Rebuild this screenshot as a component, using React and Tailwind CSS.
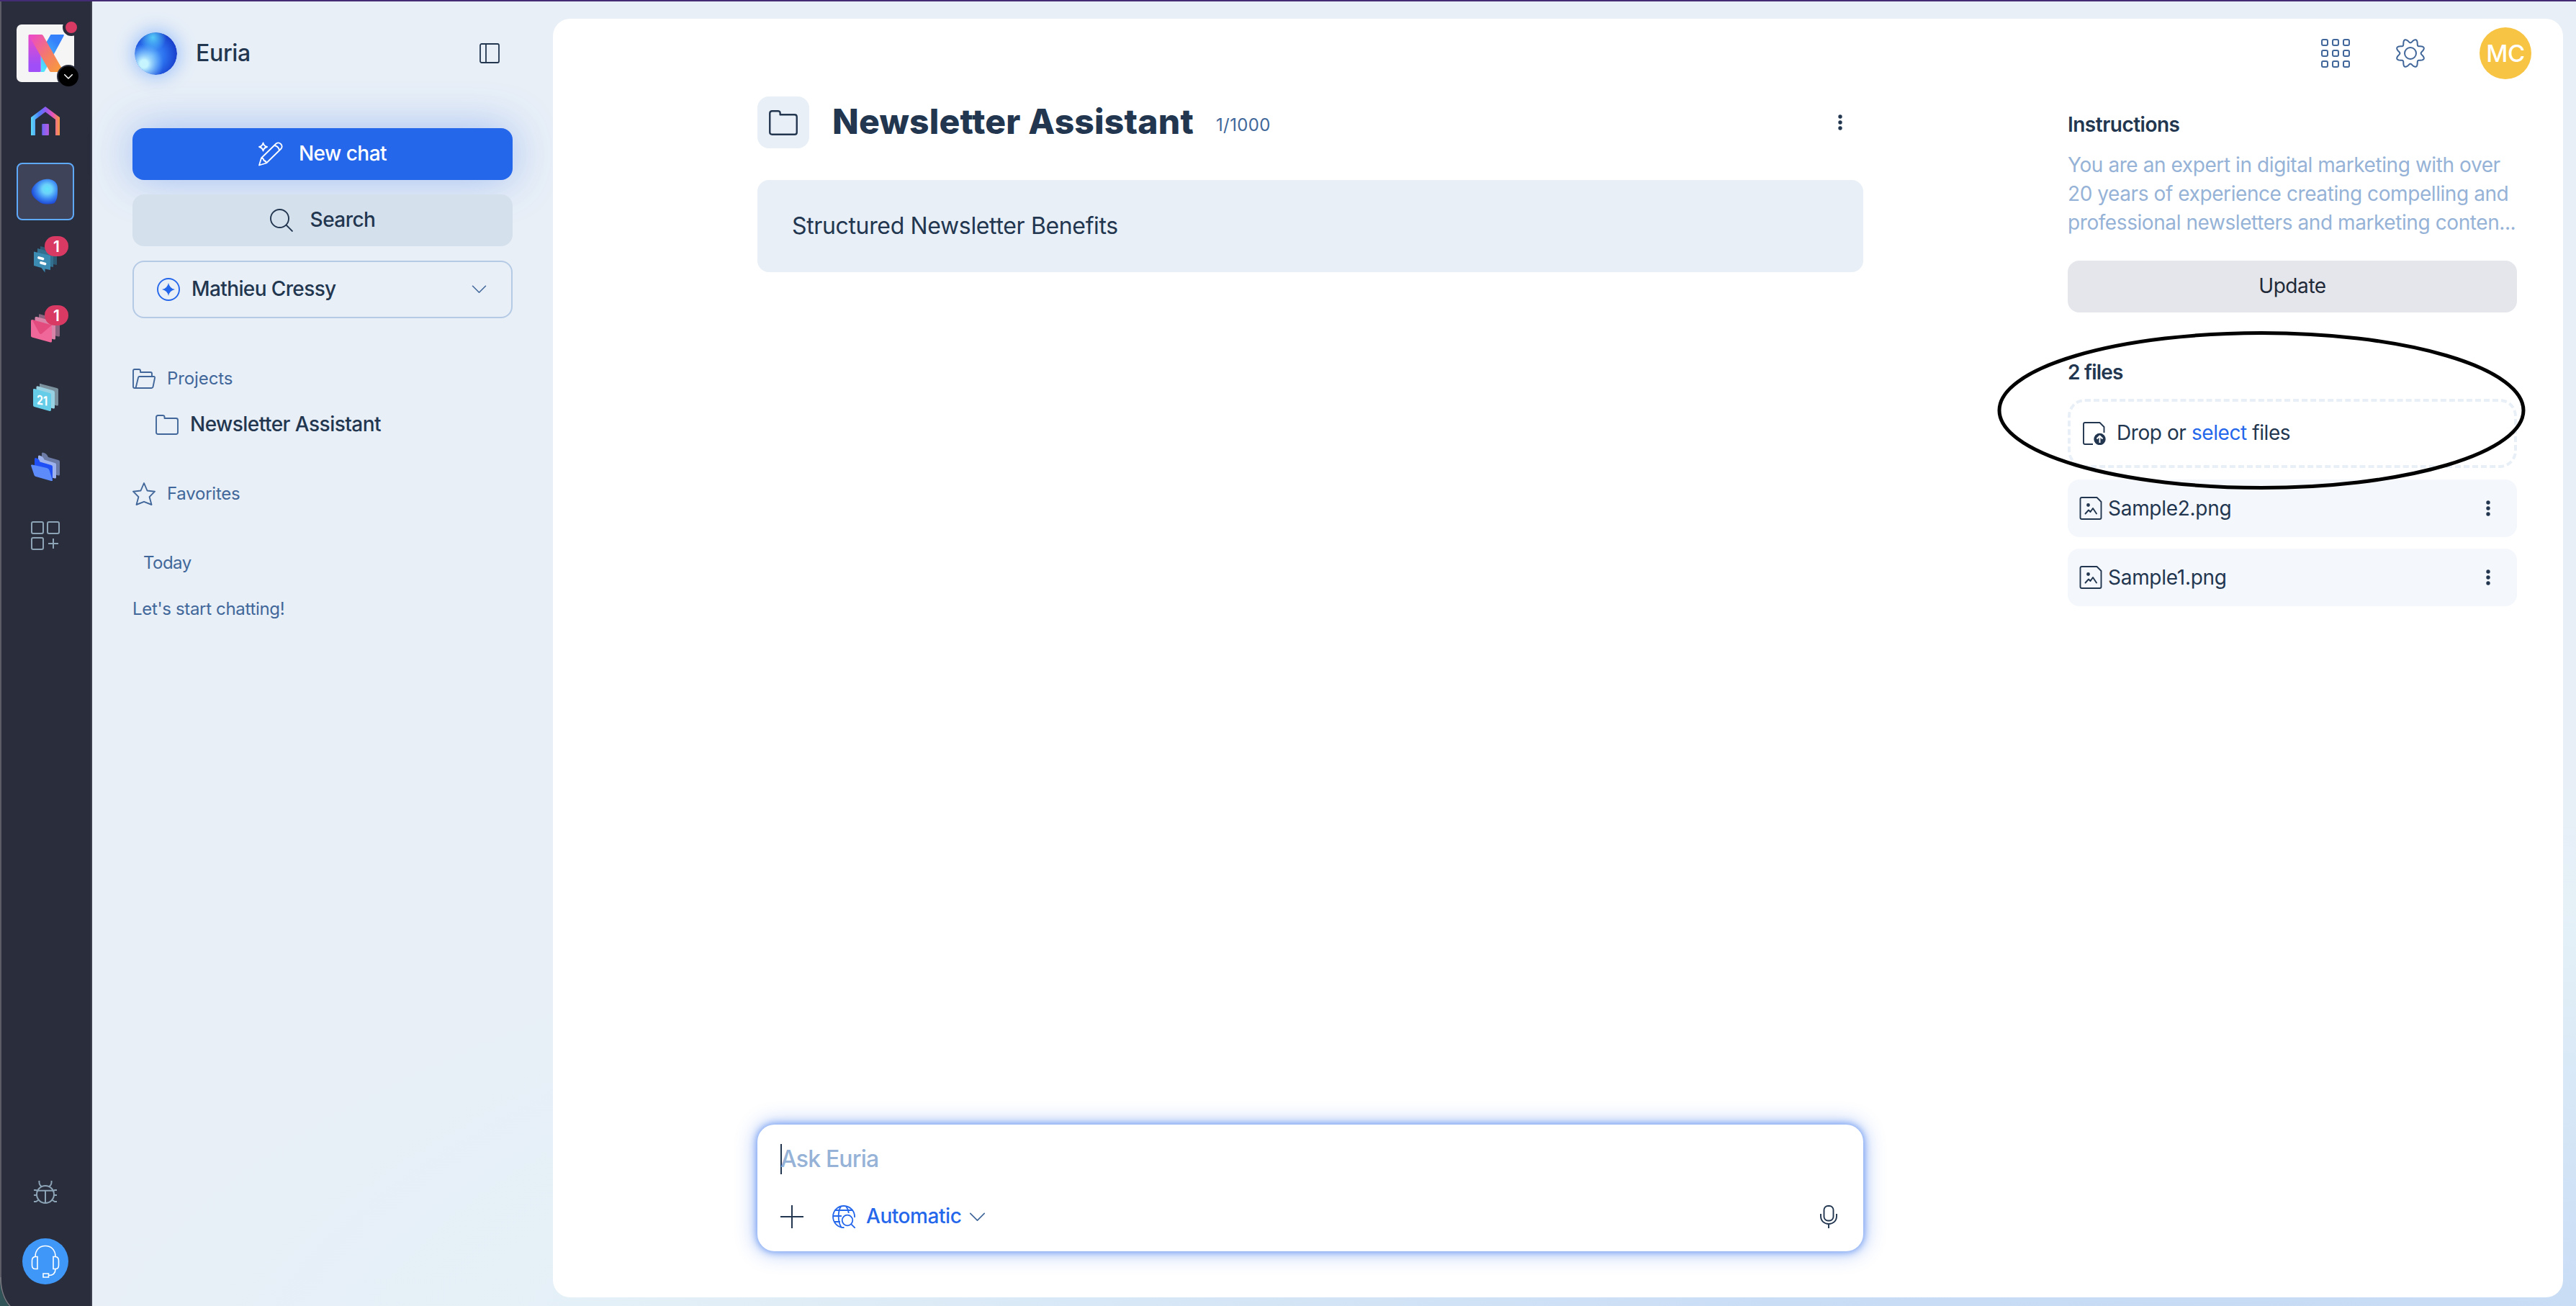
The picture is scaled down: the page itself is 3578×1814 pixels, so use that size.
import { Fragment } from "react";

// ===== DATA =====
const instructions = [
  "You are an expert in digital marketing with over",
  "20 years of experience creating compelling and",
  "professional newsletters and marketing conten...",
];

const files = ["Sample2.png", "Sample1.png"];

// rounded eight-tooth outline for the settings cog
const gearPath =
  Array.from({ length: 144 }, (_, i) => {
    const a = (i / 144) * Math.PI * 2;
    const r = 17.4 - 2.8 * Math.cos(a * 8);
    const x = (20 + r * Math.cos(a)).toFixed(2);
    const y = (20 + r * Math.sin(a)).toFixed(2);
    return `${i === 0 ? "M" : "L"}${x} ${y}`;
  }).join("") + "Z";

// ===== SMALL ICONS =====
const Dots = () => (
  <svg width="8" height="24" viewBox="0 0 8 24" fill="#22364f" className="shrink-0">
    <circle cx="4" cy="4" r="2.7" />
    <circle cx="4" cy="12" r="2.7" />
    <circle cx="4" cy="20" r="2.7" />
  </svg>
);

const Chevron = ({ className }) => (
  <svg width="24" height="14" viewBox="0 0 24 14" fill="none" stroke="currentColor" strokeWidth="1.8" strokeLinecap="round" strokeLinejoin="round" className={className}>
    <path d="M1.5 1.5 12 12 22.5 1.5" />
  </svg>
);

const Folder = ({ className }) => (
  <svg viewBox="0 0 32 28" fill="none" stroke="currentColor" strokeWidth="1.9" strokeLinejoin="round" className={className}>
    <path d="M1 24.5V3.5Q1 1 3.5 1H10Q12.3 1 12.5 3V5H28.5Q31 5 31 7.5V24.5Q31 27 28.5 27H3.5Q1 27 1 24.5Z" />
  </svg>
);

const FolderOpen = () => (
  <svg width="32" height="28" viewBox="0 0 32 28" fill="none" stroke="currentColor" strokeWidth="1.9" strokeLinejoin="round">
    <path d="M4.5 27H3Q1 27 1 25V3Q1 1 3 1H9Q11 1 11 3V5H25Q27 5 27 7V11" />
    <path d="M9.5 11H29.5Q31.3 11 31 13L28.6 25Q28.2 27 26.5 27H4.5L8 12.5Q8.4 11 9.5 11Z" />
  </svg>
);

const ImageFile = () => (
  <svg width="32" height="32" viewBox="0 0 32 32" fill="none" stroke="#22364f" strokeWidth="1.9" strokeLinejoin="round" className="shrink-0">
    <path d="M1.5 3Q1.5 1 3.5 1H24.5L30.5 7V29Q30.5 31 28.5 31H3.5Q1.5 31 1.5 29Z" />
    <path d="M8.500 23.500 13 18.500 15.500 21 19 16 24 23.500" strokeLinecap="round" />
    <circle cx="12.500" cy="11.500" r="2.400" fill="#22364f" stroke="none" />
  </svg>
);

const Badge = () => (
  <span className="absolute -top-3 left-[19px] flex h-7 w-[33px] items-center justify-center rounded-full bg-[#d83a64] text-[21px] font-semibold leading-none text-white">
    1
  </span>
);

// ===== APP RAIL =====
const Rail = () => (
  <nav className="flex w-32 shrink-0 flex-col items-center border-l-2 border-r-2 border-l-[#5b5c65] border-r-[#3b3e4c] bg-[#2a2d3c] pb-[30px] pr-[2px] pt-8">
    <div className="relative h-20 w-20">
      <svg width="80" height="80" viewBox="0 0 80 80">
        <defs>
          <linearGradient id="kBar" x1="0" y1="0" x2="0" y2="1">
            <stop offset="0" stopColor="#ec4bc6" />
            <stop offset="0.8" stopColor="#a04ff8" />
          </linearGradient>
          <linearGradient id="kArm" x1="0.8" y1="0" x2="0.2" y2="1">
            <stop offset="0.2" stopColor="#3580fb" />
            <stop offset="1" stopColor="#55e2fb" />
          </linearGradient>
          <linearGradient id="kLeg" x1="0" y1="0" x2="1" y2="1">
            <stop offset="0.05" stopColor="#ec4bc6" />
            <stop offset="0.55" stopColor="#f47c68" />
            <stop offset="1" stopColor="#f8a034" />
          </linearGradient>
        </defs>
        <rect width="80" height="80" rx="7" fill="#f5f5f5" />
        <path d="M47.500 14H65Q66.500 14 65.500 16L39 65Q38.500 66 37 66H33.500V38Z" fill="url(#kArm)" />
        <rect x="16.500" y="14" width="17.200" height="52" rx="1.500" fill="url(#kBar)" />
        <path d="M17.500 14H35Q36 14 37 15.500L64 63 62 66H48Q46.500 66 46 65L18 17Z" fill="url(#kLeg)" />
      </svg>
      <span className="absolute -right-2 -top-2 h-6 w-6 rounded-full border-4 border-[#2a2d3c] bg-[#d83a64]" />
      <span className="absolute -bottom-2 -right-2 flex h-8 w-8 items-center justify-center rounded-full border-2 border-[#2a2d3c] bg-black text-white">
        <Chevron className="h-[7px] w-3 stroke-[3]" />
      </span>
    </div>

    <svg width="40" height="40" viewBox="0 0 40 40" className="mt-[34px]">
      <defs>
        <linearGradient id="home">
          <stop offset="0" stopColor="#5cdcf8" />
          <stop offset="0.28" stopColor="#4a80f8" />
          <stop offset="0.5" stopColor="#8c5cf6" />
          <stop offset="0.75" stopColor="#e653b8" />
          <stop offset="1" stopColor="#f89a42" />
        </linearGradient>
        <linearGradient id="door">
          <stop offset="0" stopColor="#6c66f8" />
          <stop offset="1" stopColor="#b85ae0" />
        </linearGradient>
      </defs>
      <path d="M0 40V15L20 0 40 15V40H34V18L20 7.500 6 18V40Z" fill="url(#home)" />
      <rect x="15.300" y="24" width="9.600" height="16" rx="1" fill="url(#door)" />
    </svg>

    <div className="mt-[38px] flex h-20 w-20 items-center justify-center rounded-lg border-2 border-[#5fa9fa] bg-[#3f435a]">
      <svg width="40" height="40" viewBox="0 0 40 40">
        <defs>
          <radialGradient id="blob" cx="0.6" cy="0.4" r="0.62">
            <stop offset="0" stopColor="#62e4fa" />
            <stop offset="0.3" stopColor="#6cd2fa" />
            <stop offset="0.65" stopColor="#3b86f2" />
            <stop offset="1" stopColor="#1b45d4" />
          </radialGradient>
        </defs>
        <path d="M20 3C28 2 37 5 37 16C37 24 37 32 32 36.500C26 38 19 38 14 36C8 32 1 27 .6 20C1 13 10 4 20 3Z" fill="url(#blob)" />
      </svg>
    </div>

    {/* kChat */}
    <div className="relative mt-[34px] h-10 w-10">
      <svg width="40" height="40" viewBox="0 0 40 40">
        <path d="M13 2 36 8V28L13 24Z" fill="#2d5a75" />
        <path d="M9 5 31 11V31L9 27Z" fill="#33708f" />
        <path d="M4 9.500 27 15V35L19.500 33.500V38.500L14.500 32 4 29Z" fill="#3c8bb2" />
        <path d="M11 18 16.500 19.500M14 25 19.500 26.500" stroke="#fff" strokeWidth="3.800" strokeLinecap="round" />
      </svg>
      <Badge />
    </div>

    {/* Mail */}
    <div className="relative mt-14 h-10 w-10">
      <svg width="40" height="40" viewBox="0 0 40 40">
        <path d="M11 1Q11 0 13 .5L40 8V30Q40 32 38 31.500L11 24Z" fill="#8c6480" />
        <path d="M5.500 5Q6 3.500 8 4L34 11V34Q34 36 32 35.500L5.500 28Z" fill="#d884a8" />
        <path d="M0 9.500Q0 8 1.500 8L29 15.500V38Q29 40 27 39.500L1.500 32.500Q0 32 0 30.500Z" fill="#f06899" />
        <path d="M1.500 8 29 15.500 15 27.500Q13 29 11.500 26.500Z" fill="#e34a7e" />
      </svg>
      <Badge />
    </div>

    {/* Calendar */}
    <svg width="40" height="40" viewBox="0 0 40 40" className="mt-14">
      <path d="M12 1Q13 .5 15 1.500L36 7Q38 7.500 38 9V30Q38 32 36 31.500L12 25Z" fill="#7b929e" />
      <path d="M7.500 5Q8.500 4 10 4.500L31 10.500Q33 11 33 13V34Q33 36 31 35.500L7.500 29Z" fill="#98d2e2" />
      <path d="M3 9Q3 7.500 5 8L26 14Q28 14.500 28 16V37Q28 39.500 26 39L4.500 33Q3 32.500 3 31Z" fill="#66cde8" />
      <text x="8" y="28" transform="skewY(9)" fill="#fff" fontSize="18" fontWeight="700" fontFamily="Inter, sans-serif" textLength="15" lengthAdjust="spacingAndGlyphs">21</text>
    </svg>

    {/* Drive */}
    <svg width="40" height="40" viewBox="0 0 40 40" className="mt-14">
      <path d="M15 1.500Q16 0 18 1Q22 2 24 7L38 11Q40 11.500 40 13V31Q40 33 38 32.500L15 26Z" fill="#6b7ba6" />
      <path d="M10 5.500Q11 4 13 5Q17 6 18.500 10.500L33 15Q35 15.500 35 17V35Q35 37 33 36.500L10 30Z" fill="#9db2ec" />
      <path d="M5 9Q6 7.500 8 8.500Q11 9 12.500 13.500L28 18Q30 18.500 30 20V39L5 31Z" fill="#2050f5" />
      <path d="M0 18.500Q0 17 2 17.500L22 22Q25 23 25.500 25L30 39.500Q30 40.500 28 40L7 34Q5 33.500 4.500 32Z" fill="#5d8bfa" />
    </svg>

    {/* Add app */}
    <svg width="40" height="40" viewBox="0 0 40 40" fill="none" stroke="#8ca4b6" strokeWidth="2" className="mt-14">
      <rect x="1" y="1" width="16" height="16" rx="2" />
      <rect x="23" y="1" width="16" height="16" rx="2" />
      <rect x="1" y="23" width="16" height="16" rx="2" />
      <path d="M31 24V38M24 31H38" />
    </svg>

    {/* Bug report */}
    <svg width="32" height="32" viewBox="0 0 32 32" fill="none" stroke="#8ca4b6" strokeWidth="2" className="mt-auto">
      <circle cx="16" cy="19" r="12" />
      <path d="M6 13.700H26M16 13.700V31M7.500 0C7 4.500 8.500 7 11.500 8.500M24.500 0C25 4.500 23.500 7 20.500 8.500M0 13H3L6 14.500M0 20H4M0 29H3L7 26.500M32 13H29L26 14.500M32 20H28M32 29H29L25 26.500" />
    </svg>

    <div className="mt-12 flex h-16 w-16 items-center justify-center rounded-full bg-[#3f98f8]">
      <svg width="40" height="46" viewBox="0 0 40 46" fill="none" stroke="#fff" strokeWidth="1.600">
        <path d="M6 16.500C6 7 12 1.500 20 1.500S34 7 34 16.500" />
        <path d="M9 16.500H6Q1.500 17 1.500 22V28.500Q1.500 33.500 6 33.500H9ZM31 16.500H34Q38.500 17 38.500 22V28.500Q38.500 33.500 34 33.500H31Z" />
        <path d="M34 33.500C34 40 31 42.500 24.500 42.500M17 40H24.500V45H17Z" />
      </svg>
    </div>
  </nav>
);

// ===== SIDEBAR =====
const Sidebar = () => (
  <aside className="flex w-[640px] shrink-0 flex-col px-14 pt-9 text-[28px] font-[450] tracking-[-0.019em]">
    <div className="flex h-[72px] items-center pl-[3px] pr-[18px]">
      <svg width="59" height="59" viewBox="0 0 59 59" className="rounded-full shadow-[0_0_24px_3px_rgba(60,135,255,0.45)]">
        <defs>
          <radialGradient id="orbBase" cx="0.4" cy="0.55" r="0.62">
            <stop offset="0" stopColor="#4fa3fb" />
            <stop offset="0.5" stopColor="#2b70ee" />
            <stop offset="1" stopColor="#173bc9" />
          </radialGradient>
          <radialGradient id="orbTop" cx="0.43" cy="0.12" r="0.32">
            <stop offset="0" stopColor="#56cbf8" />
            <stop offset="1" stopColor="#56cbf8" stopOpacity="0" />
          </radialGradient>
          <radialGradient id="orbLow" cx="0.22" cy="0.74" r="0.46">
            <stop offset="0.2" stopColor="#c6f5ff" />
            <stop offset="1" stopColor="#7cc4ff" stopOpacity="0" />
          </radialGradient>
        </defs>
        <circle cx="29.500" cy="29.500" r="29.500" fill="url(#orbBase)" />
        <circle cx="29.500" cy="29.500" r="29.500" fill="url(#orbTop)" />
        <circle cx="29.500" cy="29.500" r="29.500" fill="url(#orbLow)" />
      </svg>
      <span className="ml-[26px] text-[32px] font-medium leading-10 tracking-[-0.01em]">Euria</span>
      <svg width="28" height="28" viewBox="0 0 28 28" fill="none" stroke="#22364f" strokeWidth="1.800" className="ml-auto">
        <rect x="1" y="1" width="26" height="26" rx="2" />
        <path d="M9 1V27" />
      </svg>
    </div>

    <button className="mt-[68px] flex h-[72px] items-center justify-center gap-[22px] rounded-2xl bg-[#2567eb] font-medium tracking-[-0.018em] text-white shadow-[0_0_60px_0_rgba(37,103,235,0.36)]">
      <svg width="34" height="34" viewBox="0 0 34 34" fill="none" stroke="#fff" strokeWidth="1.800" strokeLinejoin="round">
        <path d="M1 32.500 4 22.500 24.500 2.500Q28 0 31 3Q34 6 31.500 9.500L11 29.500Z" />
        <path d="M4 22.500Q7.500 23 7.500 26Q10.500 26.500 11 29.500M22 5Q28 6 29 12" />
        <path d="M6.500 1.500Q7.500 6 12 7Q7.500 8 6.500 12.500Q5.500 8 1 7Q5.500 6 6.500 1.500Z" />
      </svg>
      <span className="pb-[3px]">New chat</span>
    </button>

    <button className="relative mt-5 flex h-[72px] items-center justify-center gap-[24px] rounded-2xl bg-[#d5e0ed]">
      <svg width="32" height="32" viewBox="0 0 32 32" fill="none" stroke="#22364f" strokeWidth="1.900">
        <circle cx="13.500" cy="13.500" r="12.500" />
        <path d="M22.500 22.500 31.500 31.500" />
      </svg>
      <span className="pb-[3px]">Search</span>
    </button>

    <button className="mt-5 flex h-20 items-center rounded-2xl border-2 border-[#b5cae4] pl-8 pr-[34px]">
      <svg width="32" height="32" viewBox="0 0 32 32">
        <circle cx="16" cy="16" r="15" fill="none" stroke="#2567eb" strokeWidth="1.900" />
        <path d="M16 7Q17.500 14.500 25 16Q17.500 17.500 16 25Q14.500 17.500 7 16Q14.500 14.500 16 7Z" fill="#2567eb" />
      </svg>
      <span className="ml-4 pb-[3px] tracking-[-0.022em]">Mathieu Cressy</span>
      <Chevron className="ml-auto h-3 w-[21px] text-[#41679a]" />
    </button>

    <div className="mt-16 flex h-10 items-center gap-4 text-2xl font-normal tracking-[-0.004em] text-[#41679a]">
      <FolderOpen />
      <span>Projects</span>
    </div>
    <div className="mt-6 flex h-10 items-center gap-4 pl-8">
      <Folder className="h-7 w-8 text-[#41679a]" />
      <span className="pb-[2px]">Newsletter Assistant</span>
    </div>
    <div className="mt-14 flex h-10 items-center gap-4 text-2xl font-normal tracking-[-0.01em] text-[#41679a]">
      <svg width="32" height="32" viewBox="0 0 32 32" fill="none" stroke="currentColor" strokeWidth="1.900" strokeLinejoin="round">
        <path d="M16 1 20.500 11.500 31 12.700 23.600 20.200 26.500 31 16 26.800 5.500 31 8.400 20.200 1 12.700 11.500 11.500Z" />
      </svg>
      <span>Favorites</span>
    </div>
    <p className="mt-14 h-10 pl-[15px] text-2xl font-normal leading-[39px] text-[#41679a]">Today</p>
    <p className="mt-6 h-10 text-2xl font-normal leading-[39px] tracking-[-0.014em] text-[#41679a]">Let's start chatting!</p>
  </aside>
);

// ===== PROJECT COLUMN =====
const Project = () => (
  <section className="ml-[284px] flex w-[1536px] flex-col pb-16 pt-[108px]">
    <header className="flex h-[72px] items-center pr-7">
      <div className="flex h-[72px] w-[72px] items-center justify-center rounded-2xl bg-[#e8eff7]">
        <Folder className="h-[35px] w-10" />
      </div>
      <h1 className="ml-8 w-[502px] whitespace-nowrap pb-[3px] text-[48px] font-extrabold tracking-[0.004em]">
        Newsletter Assistant
      </h1>
      <span className="ml-[31px] mt-[7px] text-2xl tracking-[0.015em] text-[#41679a]">1/1000</span>
      <span className="ml-auto">
        <Dots />
      </span>
    </header>

    <div className="mt-11 flex h-32 items-center rounded-2xl bg-[#e8eff7] px-12 pb-[1px] text-[32px] tracking-[-0.011em]">
      Structured Newsletter Benefits
    </div>

    <div className="mt-auto h-44 rounded-3xl bg-white px-8 pt-[27px] shadow-[0_0_10px_2px_rgba(37,103,235,0.5),0_0_28px_4px_rgba(37,103,235,0.32)]">
      <div className="flex h-[42px] items-center border-l-2 border-[#22364f] text-[32px] font-[450] tracking-[-0.026em] text-[#96b3d7]">
        <span className="-ml-[2px] pb-[1px]">Ask Euria</span>
      </div>
      <div className="mt-[43px] flex h-8 items-center">
        <svg width="32" height="32" viewBox="0 0 32 32" stroke="#22364f" strokeWidth="2">
          <path d="M16 0V32M0 16H32" />
        </svg>
        <svg width="32" height="32" viewBox="0 0 32 32" fill="none" stroke="#2567eb" strokeWidth="1.800" className="ml-10">
          <path d="M16.500 31A15 15 0 1 1 31 17" />
          <path d="M3 7H29M1 15H13M3 23H11M12 1.500C7.500 9 7.500 23 12.500 30.500M19 1.500C21.500 4.500 22.500 7 22.800 11" />
          <circle cx="21" cy="21" r="7.300" />
          <path d="M26.300 26.300 32 32" />
        </svg>
        <span className="ml-[15px] pb-[3px] text-[28px] font-medium tracking-[-0.016em] text-[#2567eb]">Automatic</span>
        <Chevron className="ml-[11px] h-[13px] w-[23px] text-[#41679a]" />
        <svg width="24" height="32" viewBox="0 0 24 32" fill="none" stroke="#22364f" strokeWidth="1.900" className="ml-auto mr-1">
          <rect x="5.500" y="1" width="13" height="20.500" rx="5.500" />
          <path d="M1 12V15C1 22 6 26 12 26S23 22 23 15V12M12 26V32" />
        </svg>
      </div>
    </div>
  </section>
);

// ===== RIGHT PANEL =====
const Details = () => (
  <section className="relative ml-auto mr-11 w-[644px] pt-3 text-[28px] leading-10 tracking-[-0.015em]">
    <div className="flex h-[72px] items-center justify-end">
      <svg width="40" height="40" viewBox="0 0 40 40" fill="none" stroke="#41679a" strokeWidth="2">
        {[1, 16, 31].map((y) => (
          <Fragment key={y}>
            <rect x="1" y={y} width="8" height="8" rx="2" />
            <rect x="16" y={y} width="8" height="8" rx="2" />
            <rect x="31" y={y} width="8" height="8" rx="2" />
          </Fragment>
        ))}
      </svg>
      <svg width="40" height="40" viewBox="0 0 40 40" fill="none" stroke="#41679a" strokeWidth="2" strokeLinejoin="round" className="ml-16">
        <path d={gearPath} />
        <circle cx="20" cy="20" r="8" />
      </svg>
      <div className="ml-[76px] flex h-[72px] w-[72px] items-center justify-center rounded-full bg-[#f7c443] text-[33px] font-medium text-white">
        MC
      </div>
    </div>

    <div className="mr-5 pt-[43px]">
      <h2 className="font-semibold tracking-[-0.018em]">Instructions</h2>
      <div className="mt-4 whitespace-nowrap text-[#96b3d7]">
        {instructions.map((line) => (
          <p key={line}>{line}</p>
        ))}
      </div>
      <button className="mt-[33px] flex h-[72px] w-full items-center justify-center rounded-2xl bg-[#e5e6eb] pb-[2px] text-[#1f2937]">
        Update
      </button>

      <h2 className="mt-[63px] font-semibold tracking-[-0.028em]">2 files</h2>
      <div className="mt-[17px] flex h-24 items-center rounded-3xl border-4 border-dashed border-[#e8eff7] pl-[17px]">
        <svg width="32" height="32" viewBox="0 0 32 32" fill="none" stroke="#22364f" strokeWidth="1.900" strokeLinejoin="round">
          <path d="M14 31H3Q1 31 1 29V3Q1 1 3 1H23.500L29.500 7V15" />
          <circle cx="23.500" cy="24" r="8.200" fill="#22364f" stroke="none" />
          <path d="M23.500 29V20M19.500 23.500 23.500 19.500 27.500 23.500" stroke="#fff" />
        </svg>
        <span className="ml-[15px] pb-[3px]">
          Drop or <span className="text-[#2567eb]">select</span> files
        </span>
      </div>

      {files.map((file) => (
        <div key={file} className="mt-4 flex h-20 items-center rounded-2xl bg-[#f4f7fc] pl-4 pr-9">
          <ImageFile />
          <span className="ml-2 tracking-[-0.01em]">{file}</span>
          <span className="ml-auto">
            <Dots />
          </span>
        </div>
      ))}
    </div>

    {/* hand-drawn highlight round the upload zone */}
    <svg width="734" height="222" viewBox="0 0 734 222" fill="none" className="pointer-events-none absolute -left-[98px] top-[433px]">
      <ellipse cx="367" cy="111" rx="364" ry="107.500" stroke="#000" strokeWidth="5" />
    </svg>
  </section>
);

const App = () => {
  return (
    <div className="relative flex h-[1814px] w-[3578px] overflow-hidden border-t-2 border-[#432c74] bg-[radial-gradient(ellipse_3000px_900px_at_85%_108%,#c3d8f6_0%,#c9ddf5_25%,#e4f0f7_75%,#e8eff7_100%)] font-[Inter,sans-serif] text-[#22364f]">
      <Rail />
      <Sidebar />
      <main className="mb-3 mr-[18px] mt-6 flex flex-1 rounded-3xl bg-white">
        <Project />
        <Details />
      </main>

      {/* window corner */}
      <svg width="16" height="40" viewBox="0 0 16 40" className="absolute bottom-0 left-0">
        <path d="M0 0Q0 26 13 40H0Z" fill="#2f5356" />
        <path d="M1 0Q1 26 14 40" fill="none" stroke="#77787f" strokeWidth="1.500" />
      </svg>
    </div>
  );
};

export default App;
